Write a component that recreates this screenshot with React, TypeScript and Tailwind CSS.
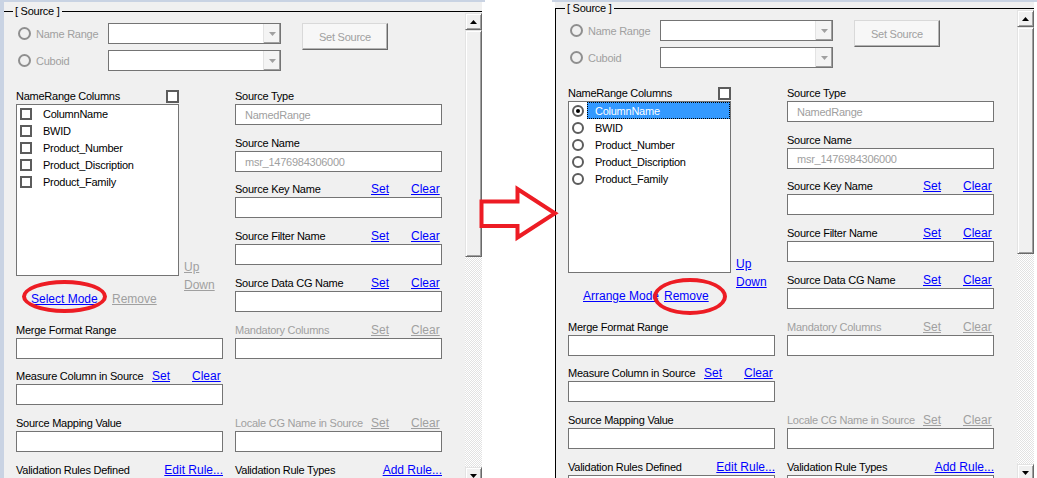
import React from "react";

const LBL = "text-[11px] tracking-[-0.25px] leading-[14px]";
const LINK = "text-[12px] leading-[14px] underline";
const MUTED = "text-[#a0a0a0]";
const BLUE = "text-[#0000ff]";

const columns = ["ColumnName", "BWID", "Product_Number", "Product_Discription", "Product_Family"];

function Radio({ checked = false, muted = false, small = false }: { checked?: boolean; muted?: boolean; small?: boolean }) {
  return (
    <span
      className={`flex shrink-0 items-center justify-center rounded-full border-2 ${small ? "h-[12px] w-[12px]" : "h-[13px] w-[13px]"} ${
        muted ? "border-[#8f8f8f] bg-[#f0f0f0]" : "border-[#5c5c5c] bg-white"
      }`}
    >
      {checked && <span className="h-[4px] w-[4px] rounded-full bg-black" />}
    </span>
  );
}

function Check({ size = "h-[12px] w-[12px]" }: { size?: string }) {
  return <span className={`${size} shrink-0 border-2 border-[#5c5c5c] bg-white`} />;
}

function Combo() {
  return (
    <div className="flex h-[21px] w-[173px] border border-[#747474] bg-white">
      <div className="flex-1" />
      <div className="flex w-[17px] items-center justify-center border-l border-[#e3e3e3] bg-[#f4f4f4] shadow-[inset_-1px_-1px_0_#a0a0a0]">
        <svg width="7" height="4" viewBox="0 0 7 4">
          <path d="M0 0h7L3.5 4z" fill="#a0a0a0" />
        </svg>
      </div>
    </div>
  );
}

function Field({
  label,
  h = "h-[47px]",
  muted = false,
  setClear = false,
  value,
  action,
}: {
  label: string;
  h?: string;
  muted?: boolean;
  setClear?: boolean;
  value?: string;
  action?: string;
}) {
  return (
    <div className={`${h} flex shrink-0 flex-col`}>
      <div className="flex h-[14px] items-center">
        <span className={`w-[136px] shrink-0 whitespace-nowrap ${LBL} ${muted ? MUTED : "text-black"}`}>{label}</span>
        {setClear && (
          <>
            <span className={`w-[40px] ${LINK} ${muted ? MUTED : BLUE}`}>Set</span>
            <span className={`${LINK} ${muted ? MUTED : BLUE}`}>Clear</span>
          </>
        )}
        {action && <span className={`ml-auto whitespace-nowrap ${LINK} ${BLUE}`}>{action}</span>}
      </div>
      <div className={`mt-[1px] flex h-[21px] items-center border border-[#747474] bg-white pl-[9px] ${LBL} ${MUTED}`}>
        {value}
      </div>
    </div>
  );
}

function Bevel({ children, h }: { children?: React.ReactNode; h: string }) {
  return (
    <div
      className={`${h} flex shrink-0 items-center justify-center border border-t-[#e3e3e3] border-l-[#e3e3e3] border-r-[#696969] border-b-[#696969] bg-[#f0f0f0] shadow-[inset_1px_1px_0_#ffffff,inset_-1px_-1px_0_#a0a0a0]`}
    >
      {children}
    </div>
  );
}

function Scrollbar({ top }: { top: string }) {
  return (
    <div className={`flex w-[17px] shrink-0 flex-col ${top}`}>
      <div className="h-px shrink-0 bg-black" />
      <div className="mt-[1px]">
        <Bevel h="h-[17px]">
          <svg width="7" height="4" viewBox="0 0 7 4">
            <path d="M3.5 0L7 4H0z" fill="#000" />
          </svg>
        </Bevel>
      </div>
      <Bevel h="h-[227px]" />
      <div className="h-[210px] shrink-0 bg-[image:repeating-conic-gradient(#e2e2e2_0%_25%,#ffffff_0%_50%)] bg-[length:2px_2px]" />
      <Bevel h="h-[17px]">
        <svg width="7" height="4" viewBox="0 0 7 4">
          <path d="M0 0h7L3.5 4z" fill="#000" />
        </svg>
      </Bevel>
    </div>
  );
}

function Panel({ arrange }: { arrange: boolean }) {
  const top = arrange ? "pt-[6px]" : "pt-[9px]";
  const linkTone = arrange ? BLUE : MUTED;
  return (
    <div className="flex h-full w-[485px] shrink-0 flex-col bg-white">
      <div className="h-[2px] shrink-0 bg-[#c9d3e3]" />
      <div className="flex min-h-0 flex-1">
        {arrange ? <div className="w-[3px] shrink-0 bg-white" /> : <div className="w-[4px] shrink-0 bg-[#c9d3e3]" />}
        <div className="flex min-w-0 flex-1 overflow-hidden bg-[#f0f0f0]">
          <div className={`min-w-0 flex-1 ${top}`}>
            <div className={`h-full border-t border-black ${arrange ? "border-l" : ""}`}>
              {/* legend */}
              <div className="-mt-[8px] flex h-[14px] items-center">
                <div className="w-[9px]" />
                <span className={`bg-[#f0f0f0] px-[2px] text-black ${LBL}`}>[ Source ]</span>
              </div>

              <div className="pl-[12px] pt-[5px]">
                {/* source kind */}
                <div className="flex">
                  <div className="flex flex-col gap-[6px]">
                    {["Name Range", "Cuboid"].map((t) => (
                      <div key={t} className="flex h-[21px] items-center">
                        <div className="flex w-[92px] items-center">
                          <span className="ml-[2px]">
                            <Radio muted />
                          </span>
                          <span className={`ml-[5px] ${LBL} ${MUTED}`}>{t}</span>
                        </div>
                        <Combo />
                      </div>
                    ))}
                  </div>
                  <div
                    className={`ml-[21px] flex h-[27px] w-[86px] items-center justify-center border border-t-[#d9d9d9] border-l-[#d9d9d9] border-r-[#696969] border-b-[#696969] bg-[#f7f7f7] shadow-[inset_-1px_-1px_0_#b4b4b4] ${LBL} ${MUTED}`}
                  >
                    Set Source
                  </div>
                </div>

                {/* columns */}
                <div className="mt-[18px] flex gap-[12px]">
                  <div className="flex w-[207px] shrink-0 flex-col">
                    <div className="h-[234px] shrink-0">
                      <div className="flex h-[14px] items-center">
                        <span className={`w-[150px] ${LBL} text-black`}>NameRange Columns</span>
                        <Check size="h-[13px] w-[13px]" />
                      </div>
                      <div className="mt-[1px] flex">
                        <div className="h-[172px] w-[163px] border border-[#747474] bg-white">
                          {columns.map((c, i) => {
                            const sel = arrange && i === 0;
                            return (
                              <div key={c} className="flex h-[17px] items-center pl-[3px]">
                                {arrange ? <Radio small checked={sel} /> : <Check />}
                                <span
                                  className={`ml-[3px] flex h-full flex-1 items-center pl-[8px] ${LBL} ${
                                    sel
                                      ? "bg-[#3399ff] text-white outline-1 outline-dotted outline-black -outline-offset-1"
                                      : "text-black"
                                  }`}
                                >
                                  {c}
                                </span>
                              </div>
                            );
                          })}
                        </div>
                        <div className="ml-[5px] flex flex-col gap-[4px] pt-[156px]">
                          <span className={`${LINK} ${linkTone}`}>Up</span>
                          <span className={`${LINK} ${linkTone}`}>Down</span>
                        </div>
                      </div>
                      <div className="flex h-[14px] items-center pl-[15px]">
                        <span className={`w-[81px] shrink-0 overflow-hidden whitespace-nowrap ${LINK} ${BLUE}`}>
                          {arrange ? "Arrange Mode" : "Select Mode"}
                        </span>
                        <span className={`bg-[#f0f0f0] ${LINK} ${linkTone}`}>Remove</span>
                      </div>
                    </div>
                    <Field label="Merge Format Range" h="h-[46px]" />
                    <Field label="Measure Column in Source" setClear />
                    <Field label="Source Mapping Value" />
                    <Field label="Validation Rules Defined" action="Edit Rule..." />
                  </div>

                  <div className="flex w-[207px] shrink-0 flex-col">
                    <Field label="Source Type" value="NamedRange" />
                    <Field label="Source Name" h="h-[46px]" value="msr_1476984306000" />
                    <Field label="Source Key Name" setClear />
                    <Field label="Source Filter Name" setClear />
                    <Field label="Source Data CG Name" setClear />
                    <Field label="Mandatory Columns" h="h-[46px]" muted setClear />
                    <div className="h-[47px] shrink-0" />
                    <Field label="Locale CG Name in Source" muted setClear />
                    <Field label="Validation Rule Types" action="Add Rule..." />
                  </div>
                </div>
              </div>
            </div>
          </div>
          <Scrollbar top={top} />
        </div>
        <div className="w-[3px] shrink-0" />
      </div>
    </div>
  );
}

export default function App() {
  return (
    <div className="relative flex h-[478px] w-[1037px] overflow-hidden bg-white font-['Liberation_Sans',Arial,sans-serif]">
      <Panel arrange={false} />
      <div className="w-[67px] shrink-0" />
      <Panel arrange />

      {/* annotations */}
      <div className="pointer-events-none absolute left-[22px] top-[280px] h-[33px] w-[85px] rounded-[50%] border-[4px] border-[#ed1c24]" />
      <div className="pointer-events-none absolute left-[653px] top-[278px] h-[37px] w-[74px] rounded-[50%] border-[4px] border-[#ed1c24]" />
      <svg className="pointer-events-none absolute left-0 top-0" width="1037" height="478">
        <polygon
          points="481.5,201.5 517.5,201.5 517.5,189 555,213.3 517.5,237.5 517.5,226 481.5,226"
          fill="#ffffff"
          stroke="#ed1c24"
          strokeWidth="4"
          strokeLinejoin="miter"
        />
      </svg>
    </div>
  );
}
